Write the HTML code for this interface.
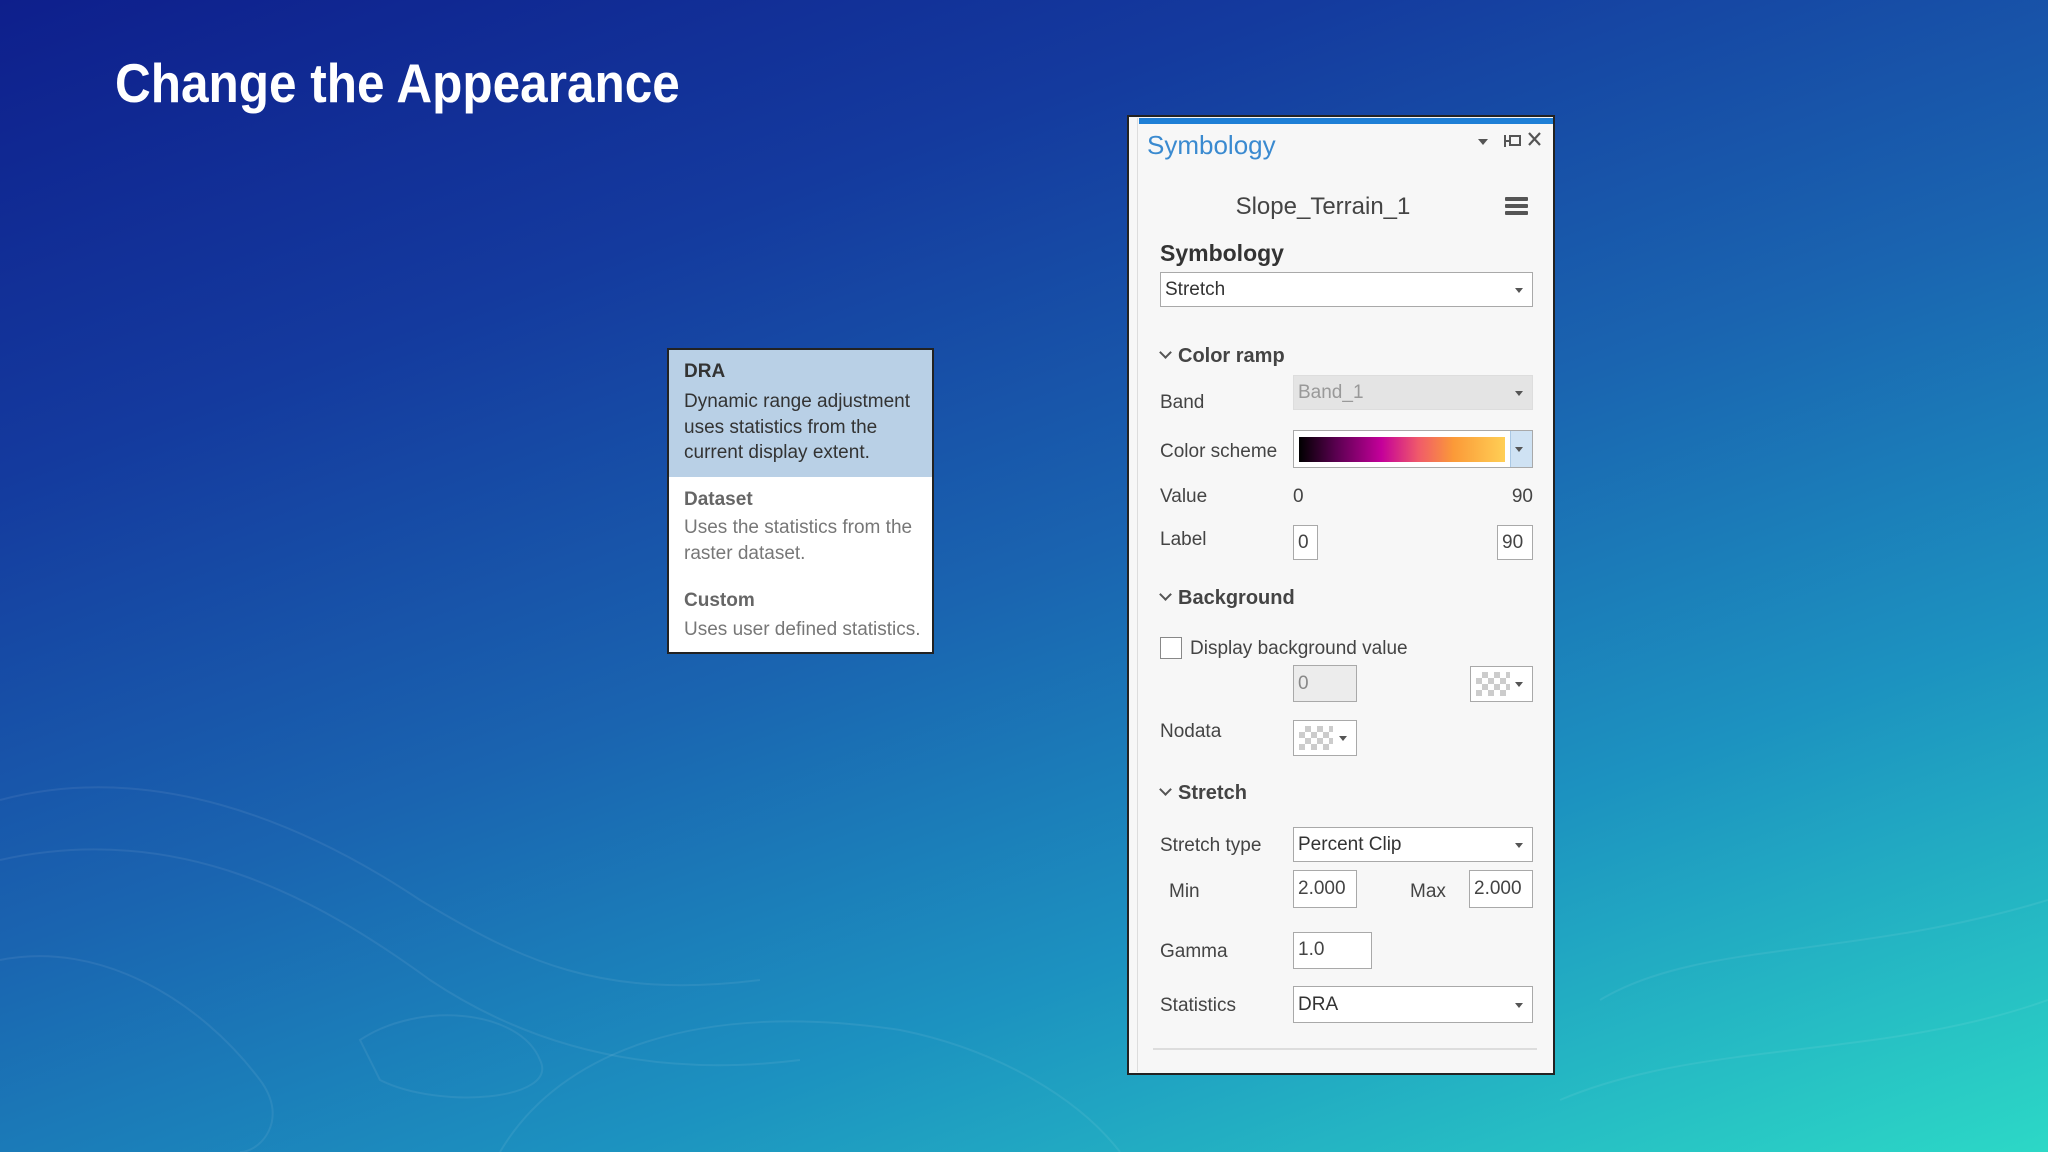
<!DOCTYPE html>
<html><head><meta charset="utf-8"><style>
*{margin:0;padding:0;box-sizing:border-box}
body{width:2048px;height:1152px;overflow:hidden;position:relative;font-family:"Liberation Sans",sans-serif;
background:linear-gradient(160deg,#0e1f8c 0%,#143a9e 25%,#1a64b0 50%,#1c92c0 72%,#2cd8c6 100%);}
.a{position:absolute;white-space:nowrap}
.t{line-height:30px;height:30px;font-size:19px;color:#444}
.box{position:absolute;border:1.5px solid #a9a9a9;background:#fff}
.dd::after{content:"";position:absolute;right:9px;top:50%;margin-top:-2px;border-left:4px solid transparent;border-right:4px solid transparent;border-top:5px solid #555}
.hdr{font-weight:bold;font-size:20px;color:#444}
.chev{position:absolute;width:9px;height:9px;border-right:2.5px solid #555;border-bottom:2.5px solid #555;transform:rotate(45deg)}
.chk{background-image:linear-gradient(45deg,#ccc 25%,transparent 25%,transparent 75%,#ccc 75%),linear-gradient(45deg,#ccc 25%,transparent 25%,transparent 75%,#ccc 75%);background-size:12px 12px;background-position:0 0,6px 6px;background-color:#fff}
</style></head><body>
<svg class="a" style="left:0;top:0" width="2048" height="1152" fill="none" stroke="rgba(255,255,255,0.07)" stroke-width="2">
<path d="M0 800 C150 760 300 820 420 900 C520 960 600 1000 760 980"/>
<path d="M0 860 C180 820 320 900 430 980 C520 1040 640 1080 800 1060"/>
<path d="M360 1040 C420 1000 520 1010 540 1060 C560 1100 440 1110 380 1080 Z"/>
<path d="M500 1152 C560 1050 700 1000 900 1030 C1000 1050 1080 1100 1120 1152"/>
<path d="M1600 1000 C1700 940 1850 960 2048 900"/>
<path d="M1560 1100 C1700 1040 1880 1060 2048 1000"/>
<path d="M0 960 C100 940 200 1000 260 1080 C290 1120 260 1152 240 1152"/>
</svg>
<div class="a" style="left:115px;top:50px;font-size:55px;font-weight:bold;color:#fff;line-height:66px;transform:scaleX(0.9);transform-origin:0 0">Change the Appearance</div>

<!-- popup -->
<div class="a" style="left:667px;top:348px;width:267px;height:306px;background:#fff;border:2px solid #222">
<div style="position:absolute;left:0;top:0;width:100%;height:127px;background:#b9d0e6"></div>
</div>
<div class="a" style="left:684px;top:359px;font-size:19px;font-weight:bold;color:#333;line-height:26px">DRA</div>
<div class="a" style="left:684px;top:389px;font-size:19px;color:#333;line-height:25.5px">Dynamic range adjustment<br>uses statistics from the<br>current display extent.</div>
<div class="a" style="left:684px;top:487px;font-size:19px;font-weight:bold;color:#666;line-height:26px">Dataset</div>
<div class="a" style="left:684px;top:515px;font-size:19px;color:#777;line-height:25.5px">Uses the statistics from the<br>raster dataset.</div>
<div class="a" style="left:684px;top:588px;font-size:19px;font-weight:bold;color:#666;line-height:26px">Custom</div>
<div class="a" style="left:684px;top:617px;font-size:19px;color:#777;line-height:26px">Uses user defined statistics.</div>

<!-- panel -->
<div class="a" style="left:1127px;top:115px;width:428px;height:960px;background:#f7f7f7;border:2px solid #222"></div>
<div class="a" style="left:1137px;top:118px;width:1px;height:954px;background:#ddd"></div>
<div class="a" style="left:1139px;top:118px;width:414px;height:6px;background:#1e7fd6"></div>
<div class="a" style="left:1147px;top:127px;font-size:26px;color:#3a8ad0;line-height:36px">Symbology</div>
<svg class="a" style="left:1475px;top:130px" width="70" height="22">
<path d="M3 9 L13 9 L8 15 Z" fill="#555"/>
<path d="M30 5 V17 M30 11 H35 M35 6 H45 V15 H35 Z" stroke="#555" stroke-width="2" fill="none"/>
<path d="M54 3 L65 15 M65 3 L54 15" stroke="#555" stroke-width="2.2"/>
</svg>
<div class="a" style="left:1233px;top:191px;width:180px;text-align:center;font-size:24px;color:#444;line-height:32px">Slope_Terrain_1</div>
<div class="a" style="left:1505px;top:197px;width:23px;height:4px;background:#555;box-shadow:0 7px 0 #555,0 14px 0 #555;border-radius:1px"></div>
<div class="a" style="left:1160px;top:237px;font-size:23px;font-weight:bold;color:#333;line-height:32px">Symbology</div>
<div class="box dd" style="left:1160px;top:272px;width:373px;height:35px"></div>
<div class="a t" style="left:1165px;top:275px;color:#333">Stretch</div>

<div class="chev" style="left:1161px;top:348px"></div>
<div class="a hdr" style="left:1178px;top:341px;line-height:30px">Color ramp</div>
<div class="a t" style="left:1160px;top:388px">Band</div>
<div class="box dd" style="left:1293px;top:375px;width:240px;height:35px;background:#e4e4e4;border-color:#ddd"></div>
<div class="a t" style="left:1298px;top:378px;color:#999">Band_1</div>
<div class="a t" style="left:1160px;top:437px">Color scheme</div>
<div class="box" style="left:1293px;top:430px;width:240px;height:38px"></div>
<div class="a" style="left:1299px;top:437px;width:206px;height:25px;background:linear-gradient(90deg,#000 0%,#5a0050 18%,#c4009a 40%,#f05a6a 58%,#fb9a38 75%,#ffcf55 100%)"></div>
<div class="a dd" style="left:1510px;top:431px;width:22px;height:36px;background:#cfe2f3;border-left:1px solid #aac8e4"></div>
<div class="a t" style="left:1160px;top:482px">Value</div>
<div class="a t" style="left:1293px;top:482px">0</div>
<div class="a t" style="left:1493px;top:482px;width:40px;text-align:right">90</div>
<div class="a t" style="left:1160px;top:525px">Label</div>
<div class="box" style="left:1293px;top:525px;width:25px;height:35px"></div>
<div class="a t" style="left:1298px;top:528px">0</div>
<div class="box" style="left:1497px;top:525px;width:36px;height:35px"></div>
<div class="a t" style="left:1502px;top:528px">90</div>

<div class="chev" style="left:1161px;top:590px"></div>
<div class="a hdr" style="left:1178px;top:583px;line-height:30px">Background</div>
<div class="box" style="left:1160px;top:637px;width:22px;height:22px;border-color:#888"></div>
<div class="a t" style="left:1190px;top:634px">Display background value</div>
<div class="box" style="left:1293px;top:665px;width:64px;height:37px;background:#ececec"></div>
<div class="a t" style="left:1298px;top:669px;color:#888">0</div>
<div class="box dd" style="left:1470px;top:666px;width:63px;height:36px"></div>
<div class="a chk" style="left:1476px;top:672px;width:34px;height:24px"></div>
<div class="a t" style="left:1160px;top:717px">Nodata</div>
<div class="box dd" style="left:1293px;top:720px;width:64px;height:36px"></div>
<div class="a chk" style="left:1299px;top:726px;width:34px;height:24px"></div>

<div class="chev" style="left:1161px;top:785px"></div>
<div class="a hdr" style="left:1178px;top:778px;line-height:30px">Stretch</div>
<div class="a t" style="left:1160px;top:831px">Stretch type</div>
<div class="box dd" style="left:1293px;top:827px;width:240px;height:35px"></div>
<div class="a t" style="left:1298px;top:830px;color:#333">Percent Clip</div>
<div class="a t" style="left:1169px;top:877px">Min</div>
<div class="box" style="left:1293px;top:870px;width:64px;height:38px"></div>
<div class="a t" style="left:1298px;top:874px">2.000</div>
<div class="a t" style="left:1410px;top:877px">Max</div>
<div class="box" style="left:1469px;top:870px;width:64px;height:38px"></div>
<div class="a t" style="left:1474px;top:874px">2.000</div>
<div class="a t" style="left:1160px;top:937px">Gamma</div>
<div class="box" style="left:1293px;top:932px;width:79px;height:37px"></div>
<div class="a t" style="left:1298px;top:935px">1.0</div>
<div class="a t" style="left:1160px;top:991px">Statistics</div>
<div class="box dd" style="left:1293px;top:986px;width:240px;height:37px"></div>
<div class="a t" style="left:1298px;top:990px;color:#333">DRA</div>
<div class="a" style="left:1153px;top:1048px;width:384px;height:2px;background:#ddd"></div>
</body></html>
